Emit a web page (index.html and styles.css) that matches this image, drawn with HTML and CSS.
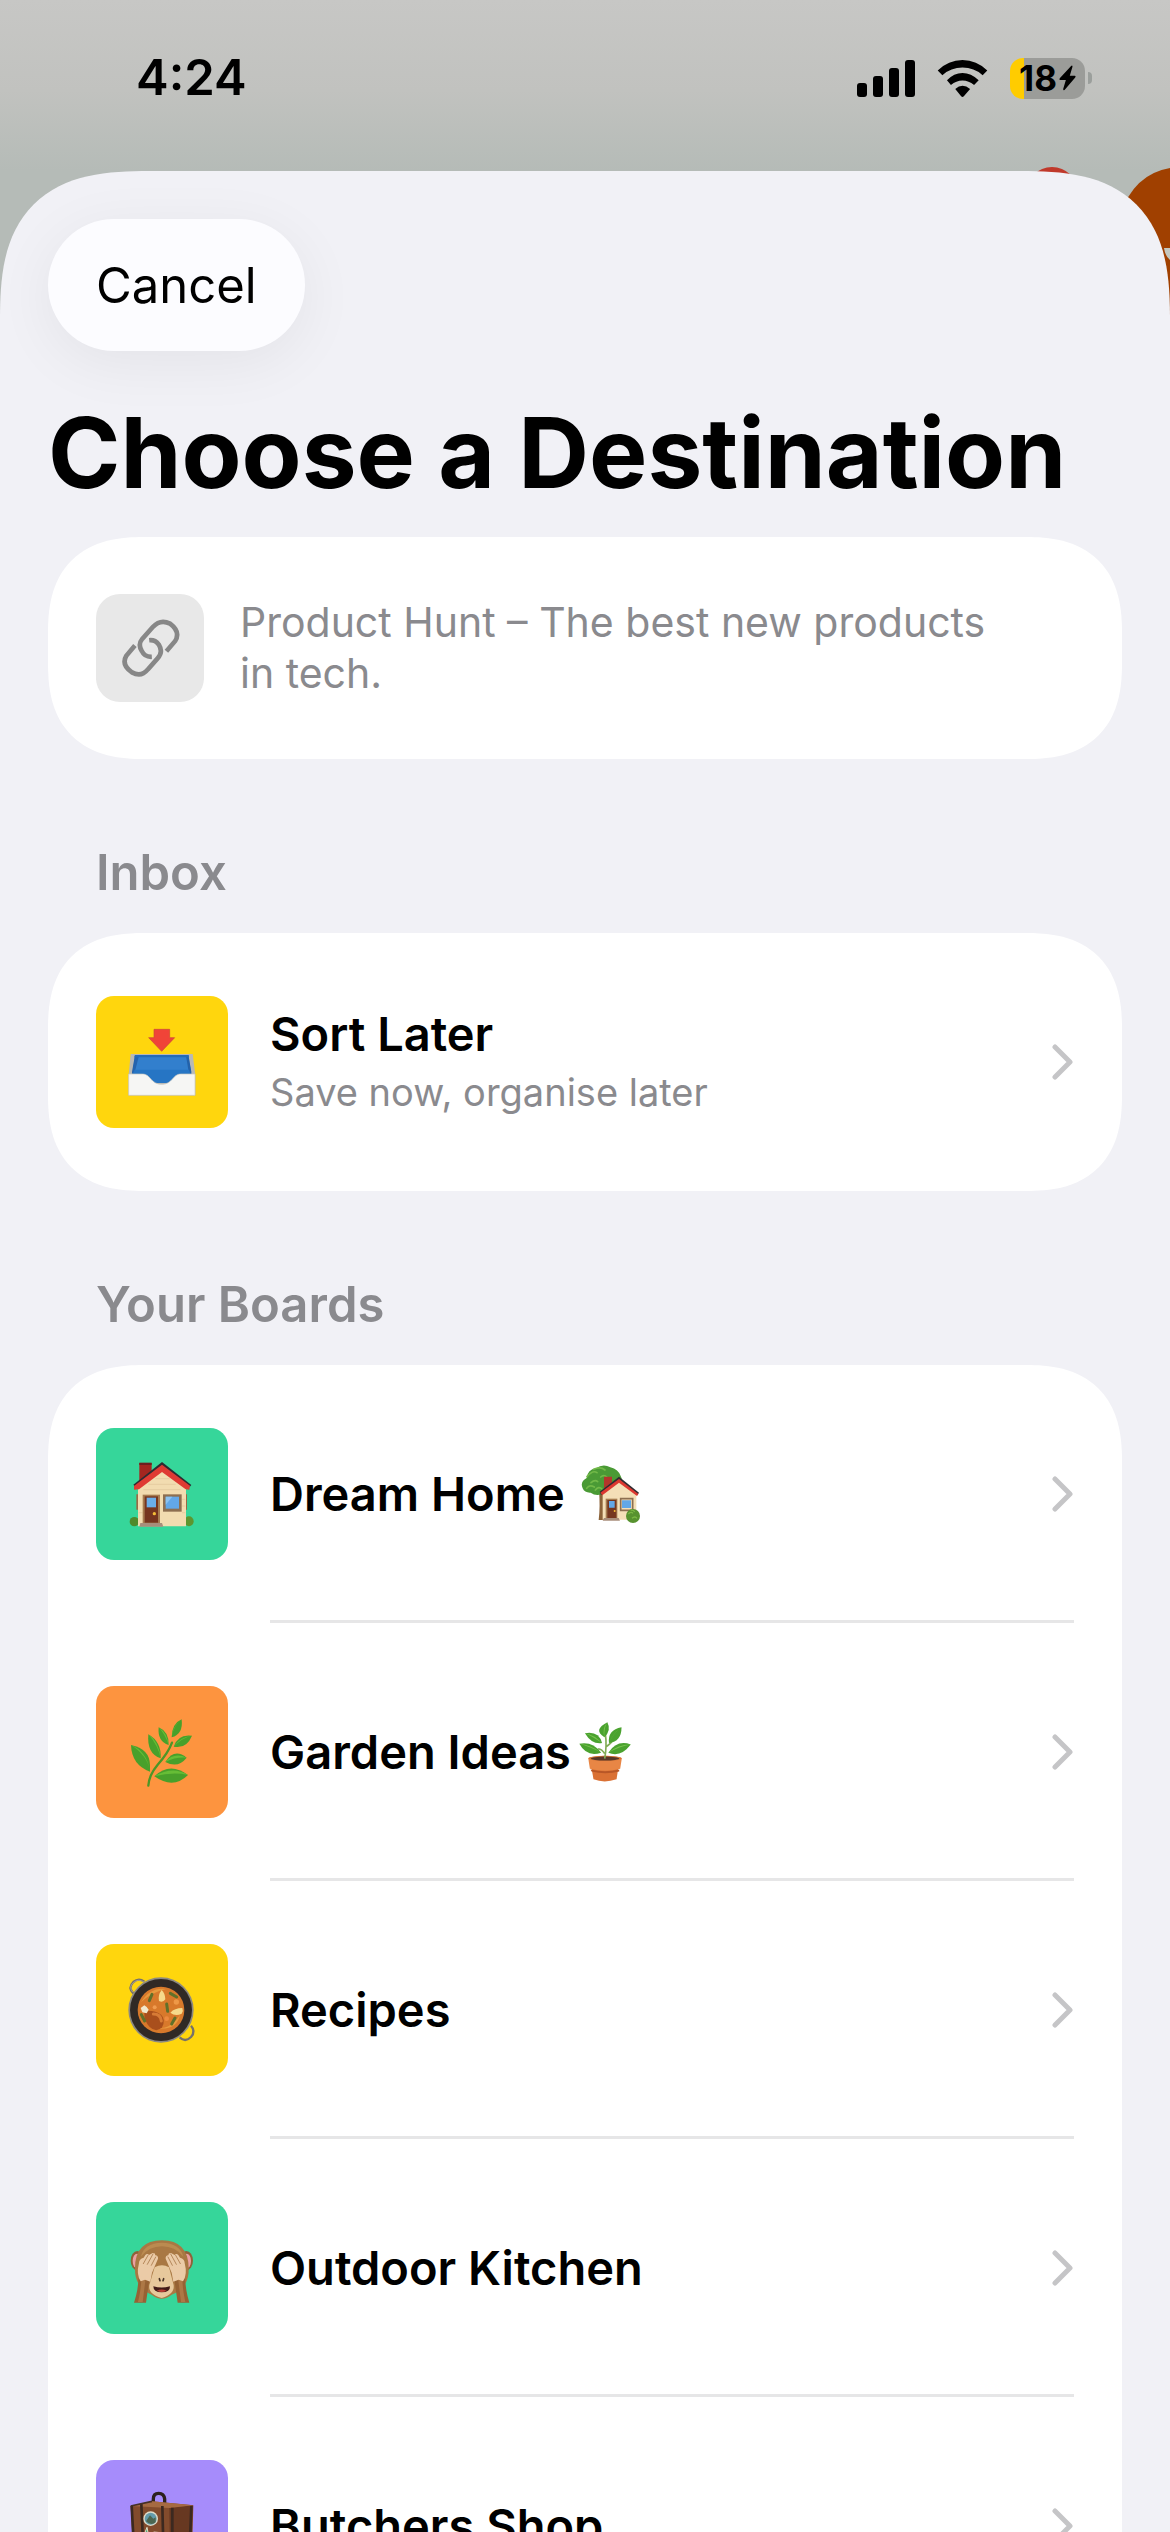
FILE: index.html
```html
<!DOCTYPE html>
<html lang="en">
<head>
  <meta charset="UTF-8" />
  <meta name="viewport" content="width=device-width, initial-scale=1" />
  <title>Choose a Destination</title>
  <link rel="stylesheet" href="styles.css">
</head>
<body>

  <!-- Page showing behind the sheet -->
  <svg class="backdrop" viewBox="0 0 180 200" aria-hidden="true">
    <circle cx="62" cy="33" r="26" fill="#c0392b" />
    <path d="M130 55Q144 14 180 8v192h-30z" fill="#a04000" />
    <path d="M174 88h6v12q-5-4-6-12z" fill="#c4c8c0" />
  </svg>

  <!-- Status bar -->
  <header class="status-bar">
    <span class="time">4:24</span>
    <div class="indicators">
      <svg class="signal" viewBox="0 0 58 37" aria-hidden="true">
        <rect x="0" y="23" width="10" height="14" rx="3" />
        <rect x="16" y="16" width="10" height="21" rx="3" />
        <rect x="32" y="8" width="10" height="29" rx="3" />
        <rect x="48" y="0" width="10" height="37" rx="3" />
      </svg>
      <svg class="wifi" viewBox="349 86 150 112" aria-hidden="true">
        <path d="M349 118Q381 86 424 86Q467 86 499 118L485 132Q459 109 424 109Q389 109 363 132Z" />
        <path d="M377 147Q398 125 424 125Q450 125 473 147L459 162Q443 148 424 148Q405 148 389 162Z" />
        <path d="M402 174Q424 154 447 174L428 196Q424 200 420 196Z" />
      </svg>
      <div class="battery">
        <div class="battery-body">
          <span>18</span>
          <svg class="bolt" viewBox="718 106 52 78" aria-hidden="true">
            <path d="M755 108Q760 105 759 111L751 138H766Q771 139 767 144L735 182Q730 184 731 178L739 151H722Q717 150 721 145Z" />
          </svg>
        </div>
        <div class="battery-tip"></div>
      </div>
    </div>
  </header>

  <!-- Sheet -->
  <main class="sheet">
    <button type="button" class="cancel">Cancel</button>
    <h1>Choose a Destination</h1>

    <div class="card preview">
      <div class="link-tile">
        <svg viewBox="120 146 178 178" aria-hidden="true">
          <path d="M205 210Q223 208 234 223Q248 246 231 264L201 298Q181 323 153 307Q120 284 136 257L162 226" />
          <path d="M213 260Q191 261 183 243Q170 223 184 206L216 170Q239 145 268 160Q301 185 283 213L257 243" />
        </svg>
      </div>
      <p>Product Hunt – The best new products in tech.</p>
    </div>

    <h2>Inbox</h2>
    <div class="card">
      <a href="#" class="row">
        <span class="tile yellow">
          <!-- inbox tray -->
          <svg viewBox="138 138 216 216" aria-hidden="true">
            <path d="M222 148h47v25h15l-39 41-39-41h16z" fill="#f04438" stroke="#c9483a" stroke-width="2" />
            <path d="M152 222h186l8 62v62H146v-62z" fill="#b9b9b5" />
            <path d="M165 225h160l9 58-45 26h-88l-43-26z" fill="#327fcd" />
            <path d="M165 225l-9 50v6h7l14-54z" fill="#2463ae" />
            <path d="M325 225l9 50v6h-7l-9-54z" fill="#2362aa" />
            <path d="M165 225h160l2 7H163z" fill="#246bb8" />
            <path d="M164 269h163l4 12-31 28h-108l-34-28z" fill="#2675c4" />
            <path d="M146 282h42c24 0 24 31 57 31s33-31 57-31h43v64H146z" fill="#f6f6f4" stroke="#c8c7c0" stroke-width="2" />
          </svg>
        </span>
        <span class="label">
          <span class="name">Sort Later</span>
          <span class="hint">Save now, organise later</span>
        </span>
        <svg class="chevron" viewBox="0 0 24 36" aria-hidden="true"><path d="M5 3l15 15L5 33" /></svg>
      </a>
    </div>

    <h2>Your Boards</h2>
    <div class="card">
      <a href="#" class="row">
        <span class="tile green">
          <!-- house -->
          <svg viewBox="138 141 216 216" aria-hidden="true">
            <ellipse cx="163" cy="332" rx="14" ry="14" fill="#4f8a2c" />
            <ellipse cx="327" cy="331" rx="14" ry="15" fill="#5d962f" />
            <path d="M169 250h8v46h-8zM314 250h7v46h-7z" fill="#9a6a45" />
            <path d="M174 222l73-55 71 55v124H174z" fill="#f2dcb0" />
            <path d="M190 236h112M205 220h82M226 203h43M306 265h10M306 285h10M306 305h10M176 305h12" stroke="#dfc698" stroke-width="2" />
            <path d="M178 156h37v30l-37 27z" fill="#a32620" />
            <path d="M178 155h37v7h-37z" fill="#6d1f20" />
            <path d="M160 221l86-68 88 69-5 6-83-62-80 61z" fill="#2d2b31" />
            <path d="M162 225l84-64 84 63-2 12-11-1-71-52-69 52-15 1z" fill="#df3a33" />
            <path d="M188 251h52v87h-52z" fill="#a67c50" />
            <path d="M194 256h40v79h-40z" fill="#76351f" />
            <path d="M200 260h28v29h-28z" fill="#6aaee9" />
            <circle cx="223" cy="308" r="5" fill="#f4bd38" />
            <path d="M181 336h65l4 11h-72z" fill="#a88e7b" />
            <path d="M249 250h56v52h-56z" fill="#8d6f50" />
            <path d="M257 257h40v36h-40z" fill="#62a7e7" />
            <path d="M257 257h20l-20 24z" fill="#8bc2f0" />
          </svg>
        </span>
        <span class="name">Dream Home</span>
        <!-- house with garden -->
        <svg class="emoji home" viewBox="65 72 180 180" role="img" aria-label="house with garden">
          <path d="M119 150h16v90h-17q5-40 1-90z" fill="#8b6239" />
          <path d="M70 145q-9-20 12-31 3-25 28-29 21-15 43-3 24 5 32 28 11 22-6 38-17 18-42 11-25 12-43-1-18 1-24-13z" fill="#4a9a35" />
          <path d="M83 110q18-21 30-12M103 88q20-10 34 2M82 145q8-13 23-4M108 150q10-13 20-3M95 128q12-10 20-3M124 111q10-9 19 1" stroke="#72b948" stroke-width="5" fill="none" stroke-linecap="round" />
          <path d="M134 110h24v24l-24 16z" fill="#b3362b" />
          <path d="M130 156l50-38 51 39v82h-101z" fill="#f4dfb7" />
          <path d="M121 155l58-45 60 48-5 8-55-42-54 41z" fill="#2f2c31" />
          <path d="M123 158l56-41 58 45-4 6-54-40-50 38z" fill="#dc3830" />
          <path d="M139 176h35v63h-35z" fill="#a57c50" />
          <path d="M144 180h27v55h-27z" fill="#75361f" />
          <path d="M149 183h17v20h-17zM188 181h27v23h-27z" fill="#62a7e7" />
          <path d="M184 176h36v35h-36z" fill="none" stroke="#8d6f50" stroke-width="5" />
          <circle cx="166" cy="213" r="3" fill="#f4bd38" />
          <path d="M134 234h44l4 8h-52z" fill="#a88e7b" />
          <circle cx="221" cy="228" r="21" fill="#57922f" />
          <path d="M207 222q8-9 14-2M218 235q9-8 15 0M214 211q8-2 12 5" stroke="#7bb744" stroke-width="4" fill="none" />
        </svg>
        <svg class="chevron" viewBox="0 0 24 36" aria-hidden="true"><path d="M5 3l15 15L5 33" /></svg>
      </a>

      <a href="#" class="row">
        <span class="tile orange">
          <!-- herb -->
          <svg viewBox="138 135 216 216" aria-hidden="true">
            <path d="M205 344q2-32 28-63 31-34 43-66" fill="none" stroke="#4c9627" stroke-width="7" stroke-linecap="round" />
            <g fill="#48a02b">
              <path d="M153 222q57 12 57 61v19q-55-20-57-80z" />
              <path d="M205 190q40 23 37 72-42-13-37-72z" />
              <path d="M236 169q31 13 30 53-34-10-30-53z" />
              <path d="M305 145q-29 12-30 54 35-8 30-54z" />
              <path d="M336 194q-42-6-55 33 38 8 55-33z" />
              <path d="M320 260q-37-30-64 13 38 20 64-13z" />
              <path d="M324 312q-54-41-101 4 57 40 101-4z" />
            </g>
            <g fill="#66bd36">
              <path d="M153 222q46 17 57 78-8-47-57-78z" />
              <path d="M205 190q32 23 37 72-8-39-37-72z" />
              <path d="M236 169q26 18 30 53-10-31-30-53z" />
              <path d="M305 145q-25 20-30 54 1-32 30-54z" />
              <path d="M336 194q-37 4-55 33 24-26 55-33z" />
              <path d="M320 260q-39-17-64 13 32-16 64-13z" />
              <path d="M324 312q-46-29-101 4 56-14 101-4z" />
            </g>
          </svg>
        </span>
        <span class="name">Garden Ideas</span>
        <!-- potted plant -->
        <svg class="emoji plant" viewBox="53 62 160 182" role="img" aria-label="potted plant">
          <path d="M91 202l6 34q33 13 70 0l5-34z" fill="#da7134" />
          <path d="M81 171q52-13 102 0l-5 33q-44 12-92 0z" fill="#e88645" />
          <ellipse cx="132" cy="172" rx="50" ry="8" fill="#d47638" />
          <ellipse cx="132" cy="173" rx="43" ry="6" fill="#573629" />
          <path d="M88 206q44 11 87 0v6q-42 11-84 0z" fill="#b85727" />
          <path d="M131 173q7-38 2-76M131 158q-8-14-20-15M134 138q14-10 18-16" stroke="#81ac55" stroke-width="5" fill="none" />
          <g fill="#4aa22f">
            <path d="M139 63q-45 23-9 45 22-20 9-45z" />
            <path d="M71 96q42-8 52 30-31 5-52-30z" />
            <path d="M182 78q-43 8-38 48 38-4 38-48z" />
            <path d="M54 128q40-8 66 27-43 15-66-27z" />
            <path d="M210 130q-42-15-68 25 37 16 68-25z" />
          </g>
          <path d="M139 63q-17 20-9 45-2-26 9-45zM71 96q29 5 52 30-29-20-52-30zM182 78q-27 19-38 48 12-29 38-48zM54 128q34 3 66 27-37-20-66-27zM210 130q-39 0-68 25 34-19 68-25z" fill="#77c34c" />
        </svg>
        <svg class="chevron" viewBox="0 0 24 36" aria-hidden="true"><path d="M5 3l15 15L5 33" /></svg>
      </a>

      <a href="#" class="row">
        <span class="tile yellow">
          <!-- shallow pan of food -->
          <svg viewBox="138 129 216 216" aria-hidden="true">
            <path d="M160 187q-17-17 0-34 16-14 33-1M333 284q15 17 0 34-17 17-34 1" fill="none" stroke="#77716a" stroke-width="7" />
            <path d="M158 183q-13-16 3-29 15-12 31-1" fill="none" stroke="#b7b3a8" stroke-width="2" />
            <circle cx="243" cy="237" r="98" fill="#8c8981" />
            <circle cx="243" cy="237" r="93" fill="#302925" />
            <circle cx="243" cy="237" r="70" fill="#d8792b" />
            <path d="M183 214q27-46 75-40-44 10-75 40zM225 291q47 6 75-40-10 50-75 40z" fill="#e79a3e" />
            <path d="M203 239q26 0 40 12 15 14 3 38-17 18-37-1-18-20-16-42z" fill="#a94f1c" />
            <path d="M220 249q22 0 24 21" fill="none" stroke="#d77b36" stroke-width="9" stroke-linecap="round" />
            <path d="M182 231l11-8 7 5 6 8-6 11-13-3z" fill="#f2e8cc" />
            <path d="M237 210q-4-18 8-33 10 9 11 28-7 11-19 5zM271 245q15 12 34 3 6-9 2-17-23 0-36 14z" fill="#f6d98b" />
            <path d="M216 190l-8 19M271 187l19 11M260 219l3 22M285 261l-10 18M184 251l10 19" stroke="#617029" stroke-width="9" stroke-linecap="round" />
            <circle cx="289" cy="213" r="8" fill="#ee9847" />
            <circle cx="260" cy="263" r="7" fill="#ed8a40" />
            <circle cx="224" cy="229" r="6" fill="#f09b4f" />
          </svg>
        </span>
        <span class="name">Recipes</span>
        <svg class="chevron" viewBox="0 0 24 36" aria-hidden="true"><path d="M5 3l15 15L5 33" /></svg>
      </a>

      <a href="#" class="row">
        <span class="tile green">
          <!-- see-no-evil monkey -->
          <svg viewBox="138 123 216 216" aria-hidden="true">
            <ellipse cx="172" cy="209" rx="20" ry="29" fill="#8f6239" />
            <ellipse cx="319" cy="209" rx="20" ry="29" fill="#8f6239" />
            <ellipse cx="171" cy="210" rx="13" ry="22" fill="#eaa0a1" />
            <ellipse cx="320" cy="210" rx="13" ry="22" fill="#eaa0a1" />
            <path d="M165 231q0-82 81-83 79 1 80 83 2 60-51 80-30 24-60 0-52-23-50-80z" fill="#a97843" />
            <path d="M183 197q8-41 63-42 54 1 64 42-25-31-64-31t-63 31z" fill="#bb8b50" />
            <path d="M224 229q22-12 43 0l14 53q4 27-36 39-42-12-37-39z" fill="#e7c89c" />
            <path d="M220 286q25 7 50 0 1 18-25 18-25 0-25-18z" fill="#421b18" />
            <path d="M230 299q15-7 30 0-15 8-30 0z" fill="#bb3e36" />
            <path d="M238 263l2 6M251 263l-2 6" stroke="#493426" stroke-width="5" stroke-linecap="round" />
            <path d="M176 253l33 6-11 76h-36q13-37 14-82zM315 253l-33 6 11 76h35q-12-37-13-82z" fill="#966234" />
            <path d="M184 258l13 3-9 72h-14q10-40 10-75zM307 258l-13 3 9 72h13q-9-40-9-75z" fill="#ad7846" />
            <g fill="#ebcba7">
              <path d="M177 216q0-12 14-16l5-8q6-6 11 0l11-6q8-1 8 7 9 1 8 10l-18 42-5 27-16-6-13 5q-14-20-5-55z" />
              <path d="M314 216q0-12-14-16l-5-8q-6-6-11 0l-11-6q-8-1-8 7-9 1-8 10l18 42 5 27 16-6 13 5q14-20 5-55z" />
            </g>
            <path d="M190 218l14-25M202 220l17-31M214 223l13-25M301 218l-14-25M289 220l-17-31M277 223l-13-25" stroke="#b5875a" stroke-width="3" stroke-linecap="round" />
          </svg>
        </span>
        <span class="name">Outdoor Kitchen</span>
        <svg class="chevron" viewBox="0 0 24 36" aria-hidden="true"><path d="M5 3l15 15L5 33" /></svg>
      </a>

      <a href="#" class="row">
        <span class="tile purple">
          <!-- luggage -->
          <svg viewBox="0 0 216 216" aria-hidden="true">
            <path d="M82 42V27q0-17 16-17t18 17v23" fill="none" stroke="#2d211d" stroke-width="10" />
            <path d="M14 48L78 34 202 46l-4 146-70 16-106-14z" fill="#824b2c" />
            <path d="M130 53l70-7-4 146-64 16z" fill="#673821" />
            <path d="M14 48L78 34 202 46l-72 8z" fill="#a56a42" />
            <path d="M17 48l8 146M46 42l7 158M109 48l4 158M139 53v154M196 48l-6 146" stroke="#3c2920" stroke-width="8" />
            <path d="M14 48l64-14" stroke="#463026" stroke-width="5" />
            <circle cx="74" cy="86" r="22" fill="#dddcc9" />
            <circle cx="74" cy="86" r="18" fill="#639cac" />
            <path d="M60 94l12-18 10 10 7-4v15q-14 11-29-3z" fill="#4c6650" />
            <path d="M63 112l7 36-22 2z" fill="#54a878" stroke="#e3dfca" stroke-width="3" />
            <path d="M83 126l21 2 1 25-20-1z" fill="#8dc5c6" stroke="#e3dfca" stroke-width="3" />
          </svg>
        </span>
        <span class="name">Butchers Shop</span>
        <svg class="chevron" viewBox="0 0 24 36" aria-hidden="true"><path d="M5 3l15 15L5 33" /></svg>
      </a>
    </div>
  </main>

</body>
</html>
```

FILE: styles.css
```css
:root {
  --sheet-bg: #f1f1f6;
  --card-bg: #fff;
  --text-color: #000;
  --muted: #8a8a8e;
  --separator: #e6e6e7;
  --chevron: #c5c5c7;
  --yellow: #ffd60d;
  --green: #36d69a;
  --orange: #fd943f;
  --purple: #a68cfb;
}

* {
  box-sizing: border-box;
}

body {
  margin: 0;
  height: 100vh;
  display: flex;
  flex-direction: column;
  overflow: hidden;
  position: relative;
  font-family: Inter, "Liberation Sans", sans-serif;
  color: var(--text-color);
  background: linear-gradient(#c7c7c5, #c1c2bf 90px, #b5bbb7 171px, #b5bbb7);
}

h1, h2, p {
  margin: 0;
}

.backdrop {
  position: absolute;
  top: 160px;
  right: 0;
  width: 180px;
  height: 200px;
}

/* Status bar */
.status-bar {
  flex: none;
  height: 171px;
  padding: 45px 78px 0 136px;
  display: flex;
  justify-content: space-between;
  align-items: flex-start;
}

.time {
  font-size: 49px;
  line-height: 66px;
  font-weight: 600;
}

.indicators {
  height: 66px;
  display: flex;
  align-items: center;
  gap: 22px;
}

.signal {
  width: 58px;
  height: 37px;
}

.wifi {
  width: 51px;
  height: 37px;
}

.battery {
  display: flex;
  align-items: center;
  gap: 3px;
}

.battery-body {
  width: 75px;
  height: 41px;
  border-radius: 13px;
  display: flex;
  align-items: center;
  justify-content: center;
  gap: 2px;
  background: linear-gradient(to right, #ffcc00 14px, #9b9c99 14px);
  font-size: 35px;
  font-weight: 700;
}

.bolt {
  width: 17px;
  height: 26px;
}

.battery-tip {
  width: 4px;
  height: 12px;
  border-radius: 0 4px 4px 0;
  background: #9b9f9c;
}

/* Sheet */
.sheet {
  flex: 1;
  min-height: 0;
  overflow-y: auto;
  scrollbar-width: none;
  position: relative;
  padding: 48px 48px 0;
  border-radius: 116px 116px 0 0;
  background: var(--sheet-bg);
}

.cancel {
  display: block;
  height: 132px;
  padding: 0 48px;
  border: none;
  border-radius: 66px;
  background: #fcfcff;
  color: inherit;
  font: inherit;
  font-size: 49px;
  box-shadow: 0 12px 60px rgba(0, 0, 0, 0.06);
  cursor: pointer;
}

h1 {
  margin: 41px 0 23px;
  font-size: 98px;
  line-height: 122px;
  font-weight: 700;
}

h2 {
  padding: 84px 48px 30px;
  font-size: 49px;
  line-height: 60px;
  font-weight: 600;
  color: var(--muted);
}

.card {
  border-radius: 78px;
  background: var(--card-bg);
}

/* Smoother corners where the browser has them */
@supports (corner-shape: superellipse(1.3)) {
  .sheet {
    border-radius: 150px 150px 0 0;
    corner-shape: superellipse(1.45);
  }

  .card {
    border-radius: 96px;
    corner-shape: superellipse(1.3);
  }
}

.preview {
  min-height: 222px;
  padding: 48px 120px 48px 48px;
  display: flex;
  align-items: center;
  gap: 36px;
  font-size: 41px;
  line-height: 51px;
  color: var(--muted);
}

.link-tile {
  flex: none;
  width: 108px;
  height: 108px;
  border-radius: 24px;
  display: flex;
  align-items: center;
  justify-content: center;
  background: #e8e8e8;
}

.link-tile svg {
  width: 59px;
  height: 59px;
  fill: none;
  stroke: #878787;
  stroke-width: 14;
}

/* Board rows */
.row {
  height: 258px;
  padding: 0 48px;
  display: flex;
  align-items: center;
  position: relative;
  color: inherit;
  text-decoration: none;
}

.row:not(:last-child)::after {
  content: "";
  position: absolute;
  left: 222px;
  right: 48px;
  bottom: 0;
  height: 3px;
  background: var(--separator);
}

.tile {
  flex: none;
  width: 132px;
  height: 132px;
  margin-right: 42px;
  border-radius: 18px;
  display: flex;
  align-items: center;
  justify-content: center;
}

.tile svg {
  width: 72px;
  height: 72px;
}

.tile.yellow {
  background: var(--yellow);
}

.tile.green {
  background: var(--green);
}

.tile.orange {
  background: var(--orange);
}

.tile.purple {
  background: var(--purple);
}

.label {
  display: flex;
  flex-direction: column;
}

.name {
  font-size: 47px;
  line-height: 60px;
  font-weight: 600;
}

.hint {
  font-size: 38px;
  line-height: 56px;
  color: var(--muted);
}

.emoji {
  height: 60px;
  margin-left: 16px;
}

.emoji.plant {
  margin-left: 8px;
}

.chevron {
  width: 24px;
  height: 36px;
  margin-left: auto;
  fill: none;
  stroke: var(--chevron);
  stroke-width: 5;
  stroke-linecap: round;
  stroke-linejoin: round;
}
```
